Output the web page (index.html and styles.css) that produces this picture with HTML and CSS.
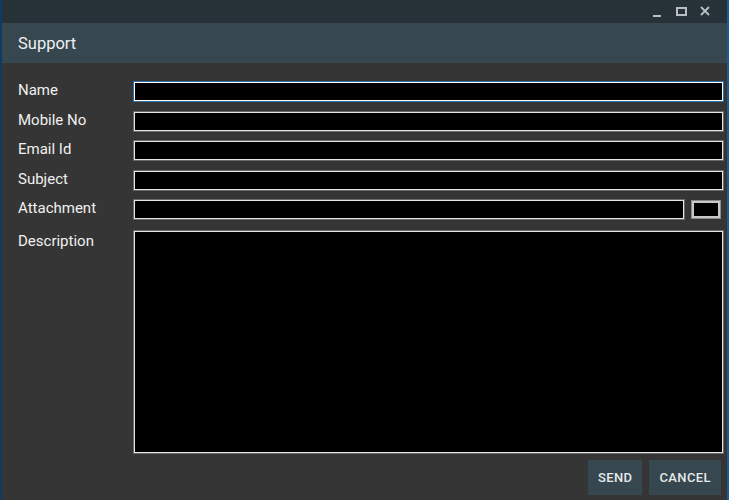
FILE: index.html
```html
<!DOCTYPE html>
<html>
<head>
<meta charset="utf-8">
<link rel="stylesheet" href="styles.css">
</head>
<body>
<div class="window">
  <div class="titlebar">
    <span class="ctl min"></span>
    <span class="ctl max"></span>
    <span class="ctl close">
      <svg width="10" height="10" viewBox="0 0 10 10"><path d="M1 1L9 9M9 1L1 9" stroke="#b8c0c6" stroke-width="1.8"/></svg>
    </span>
  </div>
  <div class="header">Support</div>
  <div class="content">
    <div class="row">
      <label class="lbl">Name</label>
      <div class="field focus"></div>
    </div>
    <div class="row">
      <label class="lbl">Mobile No</label>
      <div class="field"></div>
    </div>
    <div class="row">
      <label class="lbl">Email Id</label>
      <div class="field"></div>
    </div>
    <div class="row">
      <label class="lbl">Subject</label>
      <div class="field"></div>
    </div>
    <div class="row">
      <label class="lbl">Attachment</label>
      <div class="field attach"></div>
      <div class="browse"></div>
    </div>
    <div class="row desc">
      <label class="lbl">Description</label>
      <div class="field area"></div>
    </div>
    <div class="actions">
      <button class="btn">SEND</button>
      <button class="btn">CANCEL</button>
    </div>
  </div>
</div>
</body>
</html>
```
FILE: styles.css
```css
html, body {
  margin: 0;
  padding: 0;
  background: #353535;
}
.window {
  width: 729px;
  height: 500px;
  box-sizing: border-box;
  border-left: 2px solid #0f3a62;
  border-right: 2px solid #1a5b98;
  display: flex;
  flex-direction: column;
  font-family: Roboto, "Liberation Sans", sans-serif;
  color: #f2f2f2;
  background: #353535;
}
.titlebar {
  height: 23px;
  background: #263238;
  display: flex;
  align-items: center;
  justify-content: flex-end;
  padding-right: 10px;
}
.ctl {
  width: 24px;
  height: 23px;
  display: flex;
  align-items: center;
  justify-content: center;
}
.min::after {
  content: "";
  width: 8px;
  height: 2px;
  background: #b8c0c6;
  margin-top: 9px;
}
.max::after {
  content: "";
  width: 7px;
  height: 5px;
  border: 2px solid #b8c0c6;
  margin-top: -1px;
}
.close svg { margin-top: -1px; }
.header {
  height: 40px;
  background: #37474f;
  display: flex;
  align-items: center;
  padding-left: 16px;
  font-size: 16.5px;
  color: #eef1f2;
}
.content {
  flex: 1;
  display: flex;
  flex-direction: column;
  padding: 19px 4px 0 16px;
}
.row {
  display: flex;
  align-items: center;
  height: 19px;
  margin-bottom: 10.5px;
}
.lbl {
  width: 116px;
  flex: none;
  font-size: 15px;
  line-height: 17px;
  margin-top: -2px;
  color: #f0f0f0;
}
.field {
  flex: 1;
  height: 19px;
  box-sizing: border-box;
  background: #000;
  border: 1px solid #e6e6e6;
  box-shadow: 0 0 0 1px #6a6a6a;
}
.field.focus {
  border-color: #ffffff;
  box-shadow: 0 0 0 1px #2a6fa8;
}
.field.attach {
  flex: none;
  width: 550px;
}
.browse {
  width: 28px;
  height: 17px;
  box-sizing: border-box;
  margin-left: 8px;
  margin-top: -1px;
  background: #000;
  border: 2px solid #c8c8c8;
  box-shadow: 0 0 0 1px #8a8a8a;
}
.row.desc {
  align-items: flex-start;
  height: 222px;
  margin-top: 1px;
  margin-bottom: 7px;
}
.row.desc .lbl {
  margin-top: 2px;
}
.field.area {
  height: 222px;
}
.actions {
  display: flex;
  justify-content: flex-end;
  gap: 7px;
  padding-right: 2px;
}
.btn {
  height: 35px;
  background: #37474f;
  border: none;
  color: #e6e9ea;
  font-family: Roboto, "Liberation Sans", sans-serif;
  font-size: 13px;
  font-weight: 500;
  letter-spacing: 0.4px;
  padding: 0 10px;
}
```
